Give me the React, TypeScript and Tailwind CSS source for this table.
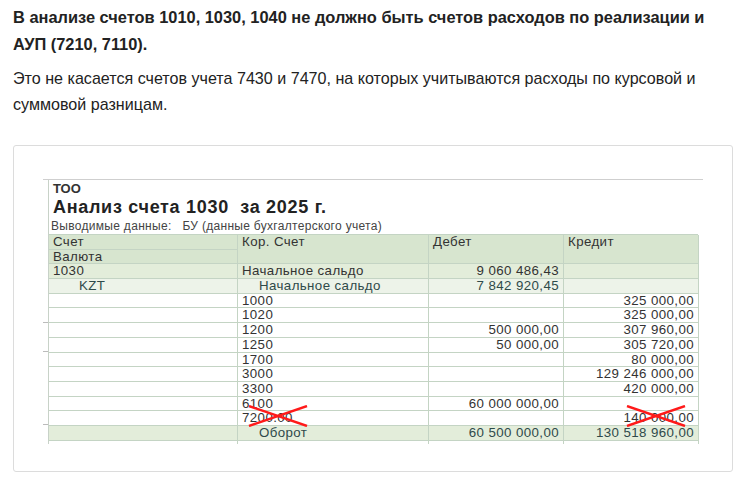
const rows = [
  { acc: "", kor: "1000", deb: "", cred: "325 000,00" },
  { acc: "", kor: "1020", deb: "", cred: "325 000,00" },
  { acc: "", kor: "1200", deb: "500 000,00", cred: "307 960,00" },
  { acc: "", kor: "1250", deb: "50 000,00", cred: "305 720,00" },
  { acc: "", kor: "1700", deb: "", cred: "80 000,00" },
  { acc: "", kor: "3000", deb: "", cred: "129 246 000,00" },
  { acc: "", kor: "3300", deb: "", cred: "420 000,00" },
  { acc: "", kor: "6100", deb: "60 000 000,00", cred: "" },
  { acc: "", kor: "7200.00", deb: "", cred: "140 000,00" },
];

const Cross = ({ className }: { className: string }) => (
  <svg className={className} viewBox="0 0 62 22" width="62" height="22">
    <line x1="2" y1="1" x2="60" y2="21" stroke="#ff1a1a" strokeWidth="2.4" />
    <line x1="2" y1="21" x2="60" y2="1" stroke="#ff1a1a" strokeWidth="2.4" />
  </svg>
);

const cell = "border-r border-b border-[#c4d4c4] px-[4px] h-[14.7px] leading-[14.7px] whitespace-nowrap overflow-hidden";
const cols = "grid grid-cols-[189px_191px_135px_135px]";

export default function App() {
  return (
    <div className="w-[748px] h-[494px] bg-white font-['Liberation_Sans',Arial,sans-serif] text-[#222]">
      <div className="pl-[13px] pr-[16px] pt-[4px]">
        <h3 className="text-[16.4px] font-bold leading-[27px]">
          В анализе счетов 1010, 1030, 1040 не должно быть счетов расходов по реализации и АУП (7210, 7110).
        </h3>
        <p className="mt-[7px] text-[16.1px] leading-[26px]">
          Это не касается счетов учета 7430 и 7470, на которых учитываются расходы по курсовой и суммовой разницам.
        </p>

        <div className="mt-[28px] w-[720px] h-[327px] border border-[#dcdcdc] rounded-[3px] pt-[33px] pl-[29px]">
          <div className="relative w-[660px] border-t border-[#cfcfcf]">
            {/* ticks on the left edge */}
            <div className="absolute left-0 top-[142px] w-[5px] border-t border-[#bbb]" />
            <div className="absolute left-0 top-[171px] w-[5px] border-t border-[#bbb]" />
            <div className="absolute left-0 top-[244px] w-[5px] border-t border-[#bbb]" />

            <div className="ml-[5px] w-[650px] border-l border-[#c8d2c8] text-[#333]">
              <div className="pl-[4px] pt-[1px] text-[13px] font-bold leading-[15px]">ТОО</div>
              <div className="pl-[4px] text-[18px] font-bold leading-[22px] tracking-[0.7px] text-[#222]">
                Анализ счета 1030&nbsp;&nbsp;за 2025 г.
              </div>
              <div className="pl-[2px] text-[12px] leading-[16px] text-[#444] tracking-[0.3px]">
                Выводимые данные:&nbsp;&nbsp;&nbsp;БУ (данные бухгалтерского учета)
              </div>

              <div className="relative text-[13.3px] tracking-[0.4px] border-t border-[#c4d4c4]">
                <div className={`${cols} bg-[#d7e5cf]`}>
                  <div className={cell}>Счет</div>
                  <div className={`${cell} row-span-2 h-[29.4px]`}>Кор. Счет</div>
                  <div className={`${cell} row-span-2 h-[29.4px]`}>Дебет</div>
                  <div className={`${cell} row-span-2 h-[29.4px]`}>Кредит</div>
                  <div className={cell}>Валюта</div>
                </div>

                <div className={`${cols} bg-[#e3edda]`}>
                  <div className={cell}>1030</div>
                  <div className={cell}>Начальное сальдо</div>
                  <div className={`${cell} text-right`}>9 060 486,43</div>
                  <div className={cell} />
                </div>
                <div className={`${cols} bg-[#edf3e9] text-[#2f4a4a]`}>
                  <div className={`${cell} pl-[30px]`}>KZT</div>
                  <div className={`${cell} pl-[21px]`}>Начальное сальдо</div>
                  <div className={`${cell} text-right`}>7 842 920,45</div>
                  <div className={cell} />
                </div>

                {rows.map((r, i) => (
                  <div key={i} className={`${cols} bg-white`}>
                    <div className={cell}>{r.acc}</div>
                    <div className={cell}>{r.kor}</div>
                    <div className={`${cell} text-right`}>{r.deb}</div>
                    <div className={`${cell} text-right`}>{r.cred}</div>
                  </div>
                ))}

                <div className={`${cols} bg-[#e3edda] text-[#2f4a4a]`}>
                  <div className={cell} />
                  <div className={`${cell} pl-[21px]`}>Оборот</div>
                  <div className={`${cell} text-right`}>60 500 000,00</div>
                  <div className={`${cell} text-right`}>130 518 960,00</div>
                </div>
                <div className={`${cols} h-[3px]`}>
                  <div className="border-r border-[#c4d4c4]" />
                  <div className="border-r border-[#c4d4c4]" />
                  <div className="border-r border-[#c4d4c4]" />
                  <div className="border-r border-[#c4d4c4]" />
                </div>

                <Cross className="absolute left-[198px] top-[170px]" />
                <Cross className="absolute left-[576px] top-[170px]" />
              </div>
            </div>
          </div>
        </div>
      </div>
    </div>
  );
}
